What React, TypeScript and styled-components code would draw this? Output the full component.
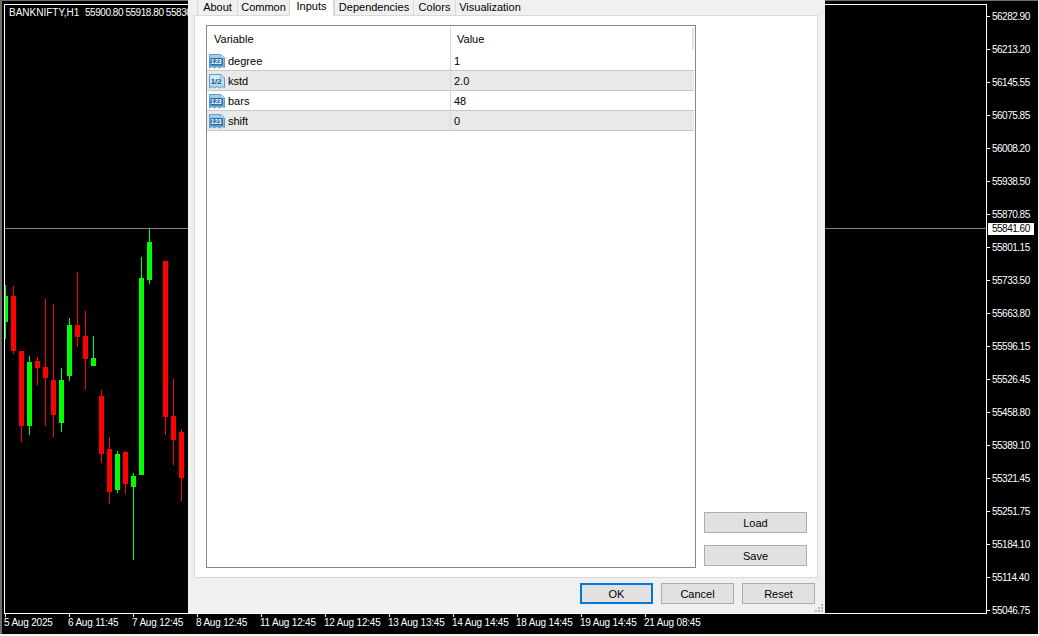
import React from "react";
import styled, { createGlobalStyle } from "styled-components";

const GlobalStyle = createGlobalStyle`
  * {
    box-sizing: border-box;
    margin: 0;
    padding: 0;
  }
  html, body {
    width: 1039px;
    height: 636px;
    overflow: hidden;
    background: #000;
  }
  body {
    font-family: "Liberation Sans", Arial, sans-serif;
    font-size: 11px;
    color: #000;
  }
`;

// x, body top, body bottom, wick top, wick bottom
const redCandles = [
  [11, 296, 351, 286, 354],
  [19, 351, 426, 351, 442],
  [35, 361, 368, 357, 385],
  [43, 367, 378, 299, 426],
  [51, 380, 415, 304, 437],
  [75, 325, 337, 272, 347],
  [83, 336, 359, 311, 390],
  [99, 396, 454, 390, 463],
  [107, 449, 492, 437, 504],
  [123, 452, 484, 451, 494],
  [163, 261, 417, 261, 435],
  [171, 416, 440, 379, 465],
  [179, 432, 478, 429, 501],
];

const greenCandles = [
  [27, 362, 426, 356, 435],
  [59, 380, 423, 368, 432],
  [67, 325, 376, 318, 381],
  [91, 358, 366, 336, 366],
  [115, 454, 490, 451, 493],
  [131, 476, 487, 473, 560],
  [139, 278, 475, 257, 475],
  [147, 242, 280, 229, 284],
];

const prices = [
  ["56282.90", 17],
  ["56213.20", 50],
  ["56145.55", 83],
  ["56075.85", 116],
  ["56008.20", 149],
  ["55938.50", 182],
  ["55870.85", 215],
  ["55801.15", 248],
  ["55733.50", 281],
  ["55663.80", 314],
  ["55596.15", 347],
  ["55526.45", 380],
  ["55458.80", 413],
  ["55389.10", 446],
  ["55321.45", 479],
  ["55251.75", 512],
  ["55184.10", 545],
  ["55114.40", 578],
  ["55046.75", 611],
] as const;

const times = [
  ["5 Aug 2025", 5],
  ["6 Aug 11:45", 69],
  ["7 Aug 12:45", 133],
  ["8 Aug 12:45", 197],
  ["11 Aug 12:45", 261],
  ["12 Aug 12:45", 325],
  ["13 Aug 13:45", 389],
  ["14 Aug 14:45", 453],
  ["18 Aug 14:45", 517],
  ["19 Aug 14:45", 581],
  ["21 Aug 08:45", 645],
] as const;

const tabs = [
  { label: "About", width: 40 },
  { label: "Common", width: 52 },
  { label: "Inputs", width: 45, active: true },
  { label: "Dependencies", width: 79 },
  { label: "Colors", width: 42 },
  { label: "Visualization", width: 69 },
];

const inputs = [
  { name: "degree", value: "1", kind: "int" },
  { name: "kstd", value: "2.0", kind: "float" },
  { name: "bars", value: "48", kind: "int" },
  { name: "shift", value: "0", kind: "int" },
];

const Page = styled.div`
  position: relative;
  width: 1039px;
  height: 636px;
  background: #000;
  overflow: hidden;
`;

const ChartSvg = styled.svg`
  display: block;
`;

const PriceText = styled.text`
  font-family: "Liberation Sans", Arial, sans-serif;
  font-size: 10px;
  letter-spacing: -0.5px;
  fill: #fff;
`;

const TimeText = styled.text`
  font-family: "Liberation Sans", Arial, sans-serif;
  font-size: 10px;
  letter-spacing: -0.2px;
  fill: #fff;
`;

const Legend = styled.text`
  font-family: "Liberation Sans", Arial, sans-serif;
  font-size: 10px;
  fill: #fff;
  white-space: pre;
`;

const LegendValues = styled.tspan`
  letter-spacing: -0.45px;
`;

const CurrentPrice = styled(PriceText)`
  fill: #000;
`;

const Dialog = styled.div`
  position: absolute;
  top: 0;
  left: 188px;
  width: 637px;
  height: 613px;
  background: #f0f0f0;
  display: flex;
  flex-direction: column;
`;

const TabStrip = styled.div`
  display: flex;
  height: 15px;
  padding-left: 9px;
  position: relative;
  z-index: 1;
`;

const Tab = styled.div<{ $active?: boolean; $width: number }>`
  width: ${(p) => p.$width}px;
  height: ${(p) => (p.$active ? 16 : 15)}px;
  line-height: ${(p) => (p.$active ? 12 : 14)}px;
  text-align: center;
  background: ${(p) => (p.$active ? "#fff" : "#f0f0f0")};
  border-left: 1px solid #d9d9d9;
  border-right: ${(p) => (p.$active ? "1px solid #d9d9d9" : "none")};
`;

const Panel = styled.div`
  height: 563px;
  margin: 0 7px 0 6px;
  padding: 9px 10px 9px 11px;
  background: #fff;
  border: 1px solid #d9d9d9;
  display: flex;
  gap: 8px;
`;

const Table = styled.div`
  width: 490px;
  height: 543px;
  border: 1px solid #828790;
  display: flex;
  flex-direction: column;
`;

const HeaderRow = styled.div`
  display: flex;
  height: 25px;
  line-height: 26px;
  position: relative;
`;

const HeaderCell = styled.div<{ $first?: boolean }>`
  width: ${(p) => (p.$first ? "244px" : "auto")};
  padding-left: ${(p) => (p.$first ? 7 : 6)}px;
  border-right: ${(p) => (p.$first ? "1px solid #d9d9d9" : "none")};
`;

const HeaderScroll = styled.div`
  position: absolute;
  right: 1px;
  top: 1px;
  width: 2px;
  height: 23px;
  background: #e3e3e3;
`;

const Row = styled.div<{ $alt: boolean }>`
  display: flex;
  align-items: center;
  height: 20px;
  margin-right: 1px;
  background: ${(p) => (p.$alt ? "#e9e9e9" : "#fff")};
  border-bottom: 1px solid #c8c8c8;
`;

const NameCell = styled.div`
  width: 244px;
  height: 100%;
  padding-left: 2px;
  display: flex;
  align-items: center;
  gap: 3px;
  border-right: 1px solid #d9d9d9;
`;

const ValueCell = styled.div`
  padding-left: 3px;
`;

const Side = styled.div`
  width: 103px;
  padding-bottom: 2px;
  display: flex;
  flex-direction: column;
  justify-content: flex-end;
  gap: 12px;
`;

const Button = styled.div<{ $primary?: boolean; $wide?: boolean }>`
  width: ${(p) => (p.$wide ? 103 : 73)}px;
  height: 21px;
  background: #e1e1e1;
  border: ${(p) => (p.$primary ? "2px solid #0078d7" : "1px solid #adadad")};
  display: flex;
  align-items: center;
  justify-content: center;
`;

const Footer = styled.div`
  display: flex;
  justify-content: flex-end;
  gap: 8px;
  padding: 5px 10px 0 0;
`;

const Grip = styled.svg`
  position: absolute;
  right: 2px;
  bottom: 1px;
`;

const IconText = styled.text<{ $float: boolean }>`
  font-family: "Liberation Sans", Arial, sans-serif;
  font-size: ${(p) => (p.$float ? 8 : 6.5)}px;
  font-weight: 700;
  fill: ${(p) => (p.$float ? "#17568f" : "#fff")};
`;

const TypeIcon = ({ kind, id }: { kind: string; id: string }) => {
  const isInt = kind === "int";
  return (
    <svg width="16" height="16" viewBox="0 0 16 16">
      <defs>
        <linearGradient id={id} x1="0" x2="0" y1="0" y2="1">
          <stop offset="0%" stopColor={isInt ? "#a9d2ee" : "#d8eefb"} />
          <stop offset="100%" stopColor={isInt ? "#6fa8d4" : "#a8d3ef"} />
        </linearGradient>
      </defs>
      <path
        d="M0.5 1.5 H11.5 L15.5 5 V14.5 L13 13.5 L10.5 15 L8 13.5 L5.5 15 L3 13.5 L0.5 15 Z"
        fill={`url(#${id})`}
        stroke="#5f9ccb"
      />
      <path d="M11.5 1.5 V5 H15.5 Z" fill="#e6f3fb" stroke="#5f9ccb" strokeWidth="0.6" />
      {isInt && <rect x="1.5" y="5" width="12.5" height="7.5" fill="#2b6fa8" />}
      <IconText $float={!isInt} x="7.2" y="11.2" textAnchor="middle">
        {isInt ? "123" : "1/2"}
      </IconText>
    </svg>
  );
};

const Chart = () => (
  <ChartSvg width="1039" height="636" viewBox="0 0 1039 636" shapeRendering="crispEdges">
    <rect x="0" y="0" width="1039" height="1" fill="#6e6e6e" />
    <rect x="0" y="0" width="2" height="636" fill="#6e6e6e" />
    <rect x="0" y="634" width="1039" height="2" fill="#f0f0f0" />
    <rect x="1038" y="0" width="1" height="636" fill="#f0f0f0" />

    <rect x="4" y="4" width="983" height="1" fill="#fff" />
    <rect x="4" y="4" width="1" height="610" fill="#fff" />
    <rect x="4" y="613" width="983" height="1" fill="#fff" />
    <rect x="986" y="4" width="1" height="610" fill="#fff" />

    <rect x="5" y="228" width="981" height="1" fill="#808090" />

    <rect x="5" y="285" width="1" height="54" fill="#00ff00" />
    <rect x="5" y="296" width="3" height="26" fill="#00ff00" />
    {redCandles.map(([x, top, bottom, wickTop, wickBottom]) => (
      <g key={x} fill="#ff0000">
        <rect x={x + 2} y={wickTop} width="1" height={wickBottom - wickTop} />
        <rect x={x} y={top} width="5" height={bottom - top} />
      </g>
    ))}
    {greenCandles.map(([x, top, bottom, wickTop, wickBottom]) => (
      <g key={x} fill="#00ff00">
        <rect x={x + 2} y={wickTop} width="1" height={wickBottom - wickTop} />
        <rect x={x} y={top} width="5" height={bottom - top} />
      </g>
    ))}

    <Legend x="9" y="16">
      BANKNIFTY,H1{"  "}
      <LegendValues>55900.80 55918.80 55830.00</LegendValues>
    </Legend>

    {prices.map(([label, y]) => (
      <g key={label}>
        <rect x="987" y={y - 1} width="3" height="1" fill="#fff" />
        <PriceText x="992" y={y + 3}>
          {label}
        </PriceText>
      </g>
    ))}
    <rect x="988" y="223" width="46" height="12" fill="#fff" />
    <CurrentPrice x="992" y="232">
      55841.60
    </CurrentPrice>

    {times.map(([label, x]) => (
      <g key={label}>
        <rect x={x} y="614" width="1" height="3" fill="#fff" />
        <TimeText x={x - 1} y="626">
          {label}
        </TimeText>
      </g>
    ))}
  </ChartSvg>
);

const App = () => {
  return (
    <>
      <GlobalStyle />
      <Page>
        <Chart />
        <Dialog>
          <TabStrip>
            {tabs.map((tab) => (
              <Tab key={tab.label} $active={tab.active} $width={tab.width}>
                {tab.label}
              </Tab>
            ))}
          </TabStrip>
          <Panel>
            <Table>
              <HeaderRow>
                <HeaderCell $first>Variable</HeaderCell>
                <HeaderCell>Value</HeaderCell>
                <HeaderScroll />
              </HeaderRow>
              {inputs.map((input, i) => (
                <Row key={input.name} $alt={i % 2 === 1}>
                  <NameCell>
                    <TypeIcon kind={input.kind} id={`icon-${input.name}`} />
                    {input.name}
                  </NameCell>
                  <ValueCell>{input.value}</ValueCell>
                </Row>
              ))}
            </Table>
            <Side>
              <Button $wide>Load</Button>
              <Button $wide>Save</Button>
            </Side>
          </Panel>
          <Footer>
            <Button $primary>OK</Button>
            <Button>Cancel</Button>
            <Button>Reset</Button>
          </Footer>
          <Grip width="8" height="8" viewBox="0 0 8 8" fill="#b8b8b8">
            <rect x="6" y="0" width="2" height="2" />
            <rect x="3" y="3" width="2" height="2" />
            <rect x="6" y="3" width="2" height="2" />
            <rect x="0" y="6" width="2" height="2" />
            <rect x="3" y="6" width="2" height="2" />
            <rect x="6" y="6" width="2" height="2" />
          </Grip>
        </Dialog>
      </Page>
    </>
  );
};

export default App;
